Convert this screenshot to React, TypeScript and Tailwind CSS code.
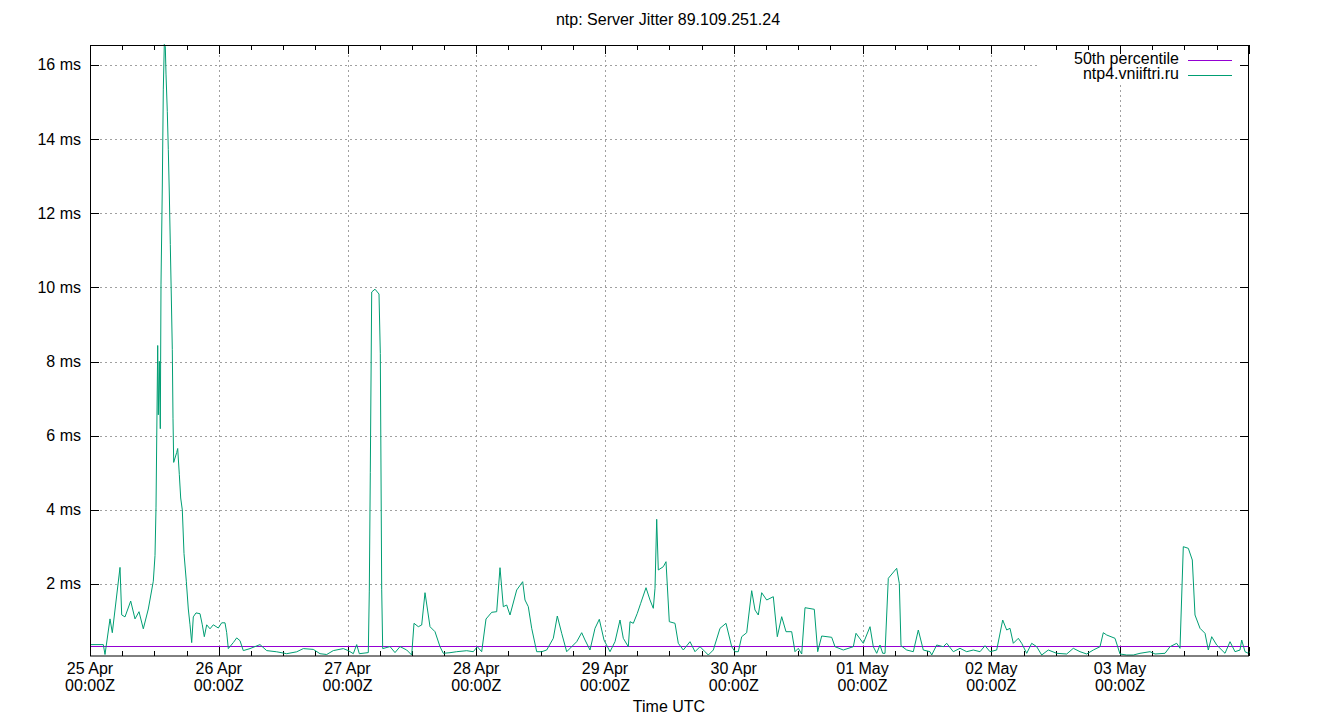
const z1: number[][] = [[0,1530],[40,1530],[45,1555],[60,1465],[67,1500],[90,1335],[95,1455],[105,1460],[122,1420],[135,1465],[147,1447],[160,1490],[175,1440],[190,1370],[195,1305],[198,1185],[203,775],[205,950],[208,815],[211,985],[213,620],[217,375],[220,130],[223,15],[226,20],[228,90],[232,185],[235,280],[238,390],[241,520],[244,650],[247,785],[249,960],[251,1070],[260,1045],[263,1035],[268,1100],[272,1160],[277,1190],[282,1300],[289,1370],[295,1440],[300,1480],[305,1525],[310,1460],[318,1450],[330,1452],[337,1480],[343,1510],[350,1480],[360,1490],[370,1480],[385,1488],[395,1475],[405,1475],[410,1500],[415,1540],[430,1525],[440,1513],[450,1520],[460,1545],[480,1540],[510,1530],[530,1545],[560,1548],[590,1553],[620,1548],[640,1540],[670,1542],[690,1553],[710,1555],[730,1545],[760,1540],[775,1545],[790,1553],[800,1530],[808,1553],[835,1550],[838,1395],[841,1095],[845,640],[855,633],[867,645],[871,795],[875,1390],[878,1540],[900,1535],[915,1550],[930,1535]];
const z2: number[][] = [[20,450],[35,467],[42,370],[55,380],[65,375],[75,278],[90,380],[105,395],[120,440],[130,460],[150,458],[170,455],[200,452],[220,455],[232,440],[245,455],[258,357],[275,337],[290,335],[300,203],[310,320],[320,315],[330,345],[350,270],[368,245],[375,300],[385,320],[395,385],[410,455],[425,455],[440,450],[460,415],[472,348],[485,400],[500,455],[515,440],[530,425],[545,398],[555,420],[570,450],[585,385],[598,358],[612,420],[630,455],[645,425],[660,360],[670,415],[685,440],[690,365],[700,370],[712,340],[722,310],[738,263],[750,300],[760,325],[765,265],[770,58],[775,210],[790,200],[798,185],[808,365],[825,370],[835,430],[850,450],[870,425],[885,455],[900,440],[915,455],[925,465],[940,450],[960,385],[978,370],[995,440],[1005,455],[1015,455],[1025,410],[1040,398],[1055,272],[1065,330],[1075,345],[1085,278],[1100,300],[1120,290],[1132,410],[1145,350],[1158,395],[1175,395],[1185,455],[1195,445],[1205,462],[1215,323],[1243,328],[1253,455],[1265,408],[1295,412],[1305,440],[1330,450]];
const z3: number[][] = [[40,440],[48,400],[70,430],[90,380],[100,440],[110,460],[120,435],[128,460],[135,460],[145,235],[170,205],[178,250],[183,437],[200,450],[220,455],[235,390],[250,450],[270,455],[275,465],[290,435],[310,440],[320,430],[340,455],[360,445],[380,455],[400,450],[420,455],[435,437],[450,455],[470,450],[488,360],[500,390],[510,385],[520,430],[535,415],[545,430],[560,460],[575,430],[590,440],[605,465],[625,450],[650,460],[680,462],[700,445],[720,455],[740,462],[760,450],[780,440],[790,398],[800,405],[825,415],[840,462],[860,465],[880,470],[900,460],[930,455],[945,462],[975,460],[990,440],[1010,430],[1020,445],[1030,140],[1045,145],[1057,180],[1065,345],[1080,385],[1095,400],[1105,450],[1115,410],[1130,435],[1155,460],[1170,425],[1185,455],[1200,450],[1205,420],[1215,455],[1225,460],[1230,455]];

const pts = [
  ...z1.map(([a, b]) => [a / 3 + 90, Math.min(655, 658.1 - (1564 - b) * 0.3962)]),
  ...z2.map(([a, b]) => [a / 3 + 400, Math.min(655, b / 3 + 500)]),
  ...z3.map(([a, b]) => [a / 3 + 840, Math.min(655, b / 3 + 500)]),
].map(([x, y]) => `${x.toFixed(1)},${y.toFixed(1)}`).join(" ");

const yTicks = [2, 4, 6, 8, 10, 12, 14, 16];
const days = ["25 Apr", "26 Apr", "27 Apr", "28 Apr", "29 Apr", "30 Apr", "01 May", "02 May", "03 May"];
const yOf = (ms: number) => 658.1 - ms * 37.07;
const xOf = (i: number) => 90 + i * 128.75;

export default function App() {
  const minor = Array.from({ length: 37 }, (_, i) => 90 + i * 32.19).filter((x) => x < 1249);
  return (
    <div className="w-[1340px] h-[720px] bg-white" style={{ fontFamily: '"Liberation Sans", Arial, sans-serif' }}>
      <svg width="1340" height="720" viewBox="0 0 1340 720" className="block">
        <g stroke="#a0a0a0" strokeWidth="1" strokeDasharray="2,3">
          {yTicks.map((t) => (
            <line key={t} x1="90" x2="1249" y1={Math.round(yOf(t)) + 0.5} y2={Math.round(yOf(t)) + 0.5} />
          ))}
          {days.slice(1).map((_, i) => (
            <line key={i} x1={Math.round(xOf(i + 1)) + 0.5} x2={Math.round(xOf(i + 1)) + 0.5} y1="45" y2="656" />
          ))}
        </g>
        <rect x="1038" y="46" width="200" height="36" fill="white" />
        <g stroke="black" strokeWidth="1">
          {yTicks.map((t) => (
            <g key={t}>
              <line x1="90" x2="99" y1={Math.round(yOf(t)) + 0.5} y2={Math.round(yOf(t)) + 0.5} />
              <line x1="1240" x2="1249" y1={Math.round(yOf(t)) + 0.5} y2={Math.round(yOf(t)) + 0.5} />
            </g>
          ))}
          {minor.map((x, i) => {
            const major = i % 4 === 0;
            const xx = Math.round(x) + 0.5;
            return (
              <g key={i}>
                <line x1={xx} x2={xx} y1="656" y2={major ? 647 : 651} />
                <line x1={xx} x2={xx} y1="45" y2={major ? 54 : 50} />
              </g>
            );
          })}
        </g>
        <line x1="90" x2="1249" y1="646.5" y2="646.5" stroke="#9400d3" strokeWidth="1" />
        <polyline points={pts} fill="none" stroke="#009e73" strokeWidth="1" />
        <rect x="90.5" y="45.5" width="1158" height="610.5" fill="none" stroke="black" strokeWidth="1" />
        <g fontSize="16" fill="black">
          <text x="668" y="25" textAnchor="middle">ntp: Server Jitter 89.109.251.24</text>
          {yTicks.map((t) => (
            <text key={t} x="81" y={yOf(t) + 5.5} textAnchor="end">{t} ms</text>
          ))}
          {days.map((d, i) => (
            <g key={d}>
              <text x={xOf(i)} y="674" textAnchor="middle">{d}</text>
              <text x={xOf(i)} y="691" textAnchor="middle">00:00Z</text>
            </g>
          ))}
          <text x="669" y="712" textAnchor="middle">Time UTC</text>
          <text x="1179" y="64" textAnchor="end">50th percentile</text>
          <text x="1179" y="79" textAnchor="end">ntp4.vniiftri.ru</text>
        </g>
        <line x1="1188" x2="1232" y1="60.5" y2="60.5" stroke="#9400d3" />
        <line x1="1188" x2="1232" y1="75.5" y2="75.5" stroke="#009e73" />
      </svg>
    </div>
  );
}
